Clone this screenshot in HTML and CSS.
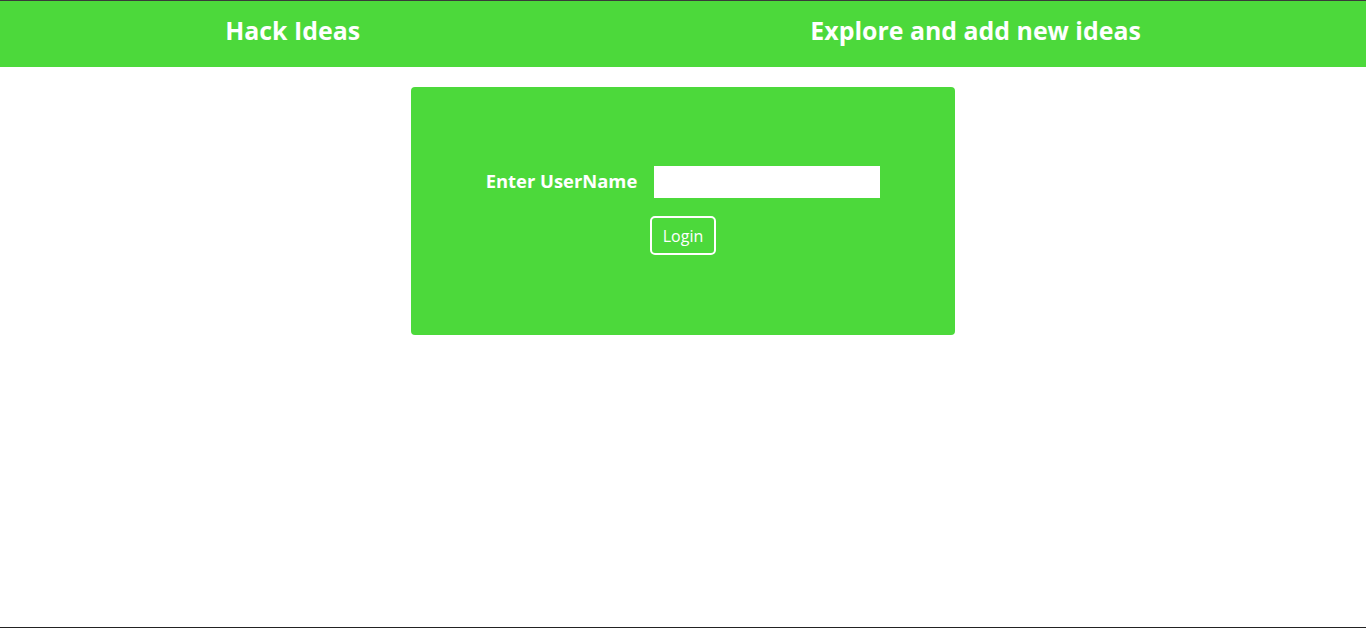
FILE: index.html
```html
<!DOCTYPE html>
<html lang="en">
<head>
<meta charset="utf-8">
<title>Hack Ideas</title>
<link rel="stylesheet" href="styles.css">
</head>
<body>
<header class="topbar">
  <h1 class="brand">Hack Ideas</h1>
  <h1 class="tagline">Explore and add new ideas</h1>
</header>
<main class="page">
  <section class="login-card">
    <form class="login-form">
      <div class="field-row">
        <label class="field-label" for="username">Enter UserName</label>
        <input class="field-input" id="username" type="text">
      </div>
      <button class="login-btn" type="button">Login</button>
    </form>
  </section>
</main>
</body>
</html>
```
FILE: styles.css
```css
html {
  height: 100%;
  box-sizing: border-box;
  border-top: 1px solid #3a3a3a;
  border-bottom: 1px solid #222;
  background: #fff;
}
body {
  margin: 0;
  font-family: "Open Sans", "Noto Sans", sans-serif;
  color: #fff;
}
.topbar {
  display: flex;
  justify-content: space-around;
  align-items: flex-start;
  height: 66px;
  box-sizing: border-box;
  padding-top: 12px;
  background: #4cd93b;
}
.brand, .tagline {
  margin: 0;
  font-size: 24.9px;
  font-weight: 700;
}
.page {
  display: flex;
  justify-content: center;
  padding-top: 20px;
}
.login-card {
  width: 544px;
  height: 248px;
  box-sizing: border-box;
  background: #4cd93b;
  border-radius: 4px;
  padding-top: 79px;
}
.login-form {
  display: flex;
  flex-direction: column;
  align-items: center;
  gap: 18px;
}
.field-row {
  display: flex;
  align-items: center;
  gap: 17px;
}
.field-label {
  font-size: 18.4px;
  font-weight: 700;
  line-height: 1.3;
  padding-bottom: 2px;
}
.field-input {
  width: 226px;
  height: 32px;
  box-sizing: border-box;
  border: none;
  margin: 0;
  padding: 0 6px;
  background: #fff;
  font-family: inherit;
  font-size: 16px;
}
.login-btn {
  height: 39px;
  width: 66px;
  box-sizing: border-box;
  border: 2px solid #fff;
  border-radius: 5px;
  background: transparent;
  color: #fff;
  font-family: inherit;
  font-size: 16px;
  padding: 0;
}
```
